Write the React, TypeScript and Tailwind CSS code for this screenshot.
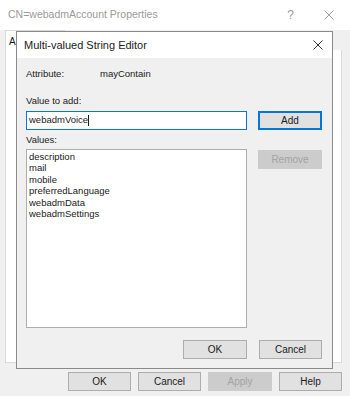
import React from 'react';

const values = ['description', 'mail', 'mobile', 'preferredLanguage', 'webadmData', 'webadmSettings'];

function WinButton({ label, disabled, focused, className = '' }: { label: string; disabled?: boolean; focused?: boolean; className?: string }) {
  const base = 'flex items-center justify-center text-[10px] leading-none';
  const look = disabled
    ? 'bg-[#cccccc] border border-[#cccccc] text-[#a3a3a3]'
    : focused
    ? 'bg-[#e1e1e1] border-2 border-[#0078d7] text-[#1a1a1a]'
    : 'bg-[#e1e1e1] border border-[#adadad] text-[#1a1a1a]';
  return <div className={`${base} ${look} ${className}`}>{label}</div>;
}

function CloseIcon({ color, size }: { color: string; size: number }) {
  return (
    <svg width={size} height={size} viewBox="0 0 10 10">
      <path d="M0.5 0.5 L9.5 9.5 M9.5 0.5 L0.5 9.5" stroke={color} strokeWidth="1" fill="none" />
    </svg>
  );
}

export default function App() {
  return (
    <div className="relative w-[350px] h-[396px] bg-[#f0f0f0] overflow-hidden" style={{ fontFamily: '"Liberation Sans", Arial, sans-serif' }}>
      {/* outer properties window */}
      <div className="h-[30px] bg-white flex items-center pl-[8px] pr-[16px]">
        <span className="text-[10.5px] text-[#9a9a9a] flex-1">CN=webadmAccount Properties</span>
        <span className="text-[12px] text-[#9a9a9a] mr-[30px]">?</span>
        <CloseIcon color="#a0a0a0" size={10} />
      </div>

      <div className="pl-[5px] pr-[8px]">
        <div className="flex h-[20px]">
          <div className="w-[60px] bg-white border-l border-t border-r border-[#d9d9d9] pl-[3px] pt-[3px] text-[10px] text-[#1a1a1a]">A</div>
        </div>
        <div className="h-[313px] bg-white border border-[#d9d9d9] border-t-0" />
      </div>

      <div className="flex justify-end gap-[7px] pr-[8px] mt-[9px]">
        <WinButton label="OK" className="w-[63px] h-[19px]" />
        <WinButton label="Cancel" className="w-[63px] h-[19px]" />
        <WinButton label="Apply" disabled className="w-[64px] h-[19px]" />
        <WinButton label="Help" className="w-[63px] h-[19px]" />
      </div>

      {/* Multi-valued String Editor dialog */}
      <div className="absolute left-[16px] top-[31px] w-[317px] h-[338px] bg-[#f0f0f0] border border-[#8a8a8a] flex flex-col">
        <div className="h-[26px] bg-white flex items-center pl-[7px] pr-[9px] shrink-0">
          <span className="flex-1 text-[11px] text-[#1a1a1a]">Multi-valued String Editor</span>
          <CloseIcon color="#333333" size={10} />
        </div>

        <div className="flex-1 flex flex-col pl-[9px] pr-[10px] text-[9.5px] text-[#1a1a1a]">
          <div className="flex items-center h-[14px] mt-[9px]">
            <span className="w-[74px]">Attribute:</span>
            <span>mayContain</span>
          </div>

          <div className="h-[14px] flex items-center mt-[13px]">Value to add:</div>

          <div className="flex justify-between mt-[3px]">
            <div className="w-[221px] h-[19px] bg-white border border-[#0078d7] flex items-center pl-[2px]">
              webadmVoice<span className="inline-block w-px h-[11px] bg-[#1a1a1a]" />
            </div>
            <WinButton label="Add" focused className="w-[64px] h-[19px]" />
          </div>

          <div className="h-[14px] flex items-center mt-[3px]">Values:</div>

          <div className="flex justify-between items-start mt-[2px]">
            <div className="w-[221px] h-[179px] bg-white border border-[#adadad] pl-[2px] pt-[1px] leading-[11.4px]">
              {values.map(v => (
                <div key={v}>{v}</div>
              ))}
            </div>
            <WinButton label="Remove" disabled className="w-[64px] h-[19px] mt-[1px]" />
          </div>

          <div className="flex justify-end gap-[12px] mt-[12px]">
            <WinButton label="OK" className="w-[64px] h-[19px]" />
            <WinButton label="Cancel" className="w-[63px] h-[19px]" />
          </div>
        </div>
      </div>
    </div>
  );
}
